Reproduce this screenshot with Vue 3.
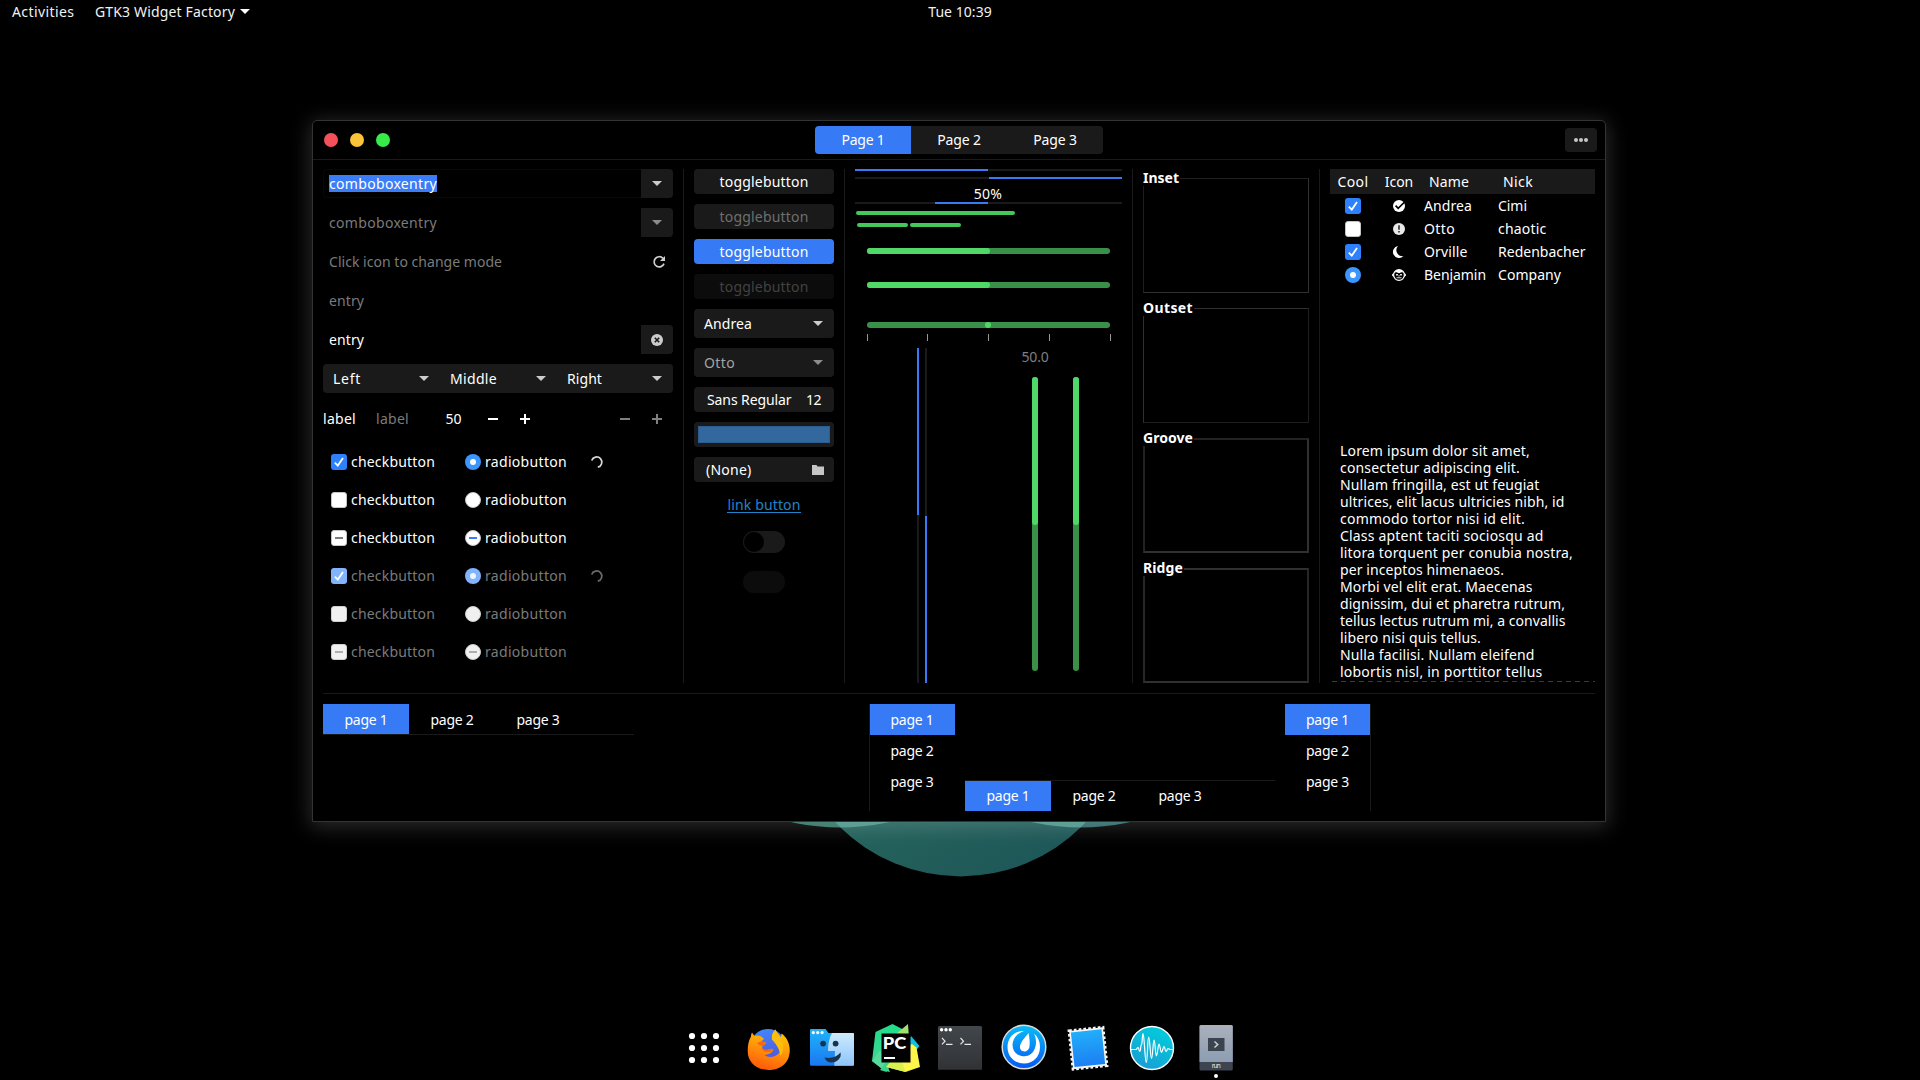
<script setup>
// Spreads a label over the given width by adjusting its letter spacing.
const vFit = {
  mounted(el, { value }) {
    const range = document.createRange()
    range.selectNodeContents(el)
    const natural = range.getBoundingClientRect().width
    const count = el.textContent.trim().length
    el.style.letterSpacing = `${((value - natural) / count).toFixed(3)}px`
  },
}

const checks = [
  { state: 'on', dim: false, spin: true },
  { state: 'off', dim: false },
  { state: 'mixed', dim: false },
  { state: 'on', dim: true, spin: true },
  { state: 'off', dim: true },
  { state: 'mixed', dim: true },
]
const linked = [
  { label: 'Left', w: 28, cls: 'first' },
  { label: 'Middle', w: 47, cls: '' },
  { label: 'Right', w: 35, cls: 'last' },
]
const frames = [
  { label: 'Inset', w: 36 },
  { label: 'Outset', w: 50 },
  { label: 'Groove', w: 50 },
  { label: 'Ridge', w: 40 },
]
const people = [
  { state: 'on', icon: 'ok', name: 'Andrea', nw: 48, nick: 'Cimi', kw: 29 },
  { state: 'off', icon: 'warn', name: 'Otto', nw: 31, nick: 'chaotic', kw: 48.5 },
  { state: 'on', icon: 'moon', name: 'Orville', nw: 43.5, nick: 'Redenbacher', kw: 87.5 },
  { state: 'radio', icon: 'monkey', name: 'Benjamin', nw: 62, nick: 'Company', kw: 63 },
]
const lorem = [
  ['Lorem ipsum dolor sit amet,', 190],
  ['consectetur adipiscing elit.', 180],
  ['Nullam fringilla, est ut feugiat', 199.5],
  ['ultrices, elit lacus ultricies nibh, id', 224.5],
  ['commodo tortor nisi id elit.', 185],
  ['Class aptent taciti sociosqu ad', 203.5],
  ['litora torquent per conubia nostra,', 233],
  ['per inceptos himenaeos.', 164],
  ['Morbi vel elit erat. Maecenas', 192.5],
  ['dignissim, dui et pharetra rutrum,', 225],
  ['tellus lectus rutrum mi, a convallis', 225.5],
  ['libero nisi quis tellus.', 141],
  ['Nulla facilisi. Nullam eleifend', 194.5],
  ['lobortis nisl, in porttitor tellus', 202.5],
  ['malesuada vitae.', 109],
]
const pages = ['page 1', 'page 2', 'page 3']
</script>

<template>
  <div class="desktop">
    <svg class="wallpaper" viewBox="0 0 400 70" width="400" height="70">
      <defs>
        <linearGradient id="wpMain" x1="0.2" y1="0" x2="0.8" y2="1">
          <stop offset="0.45" stop-color="#29695e" />
          <stop offset="1" stop-color="#1d5557" />
        </linearGradient>
        <clipPath id="wpClip"><circle cx="200.5" cy="-107.6" r="172" /></clipPath>
      </defs>
      <circle cx="80" cy="-214.5" r="230" fill="#337465" />
      <circle cx="321" cy="-214.5" r="230" fill="#2f696a" />
      <circle cx="200.5" cy="-107.6" r="172" fill="url(#wpMain)" />
      <g clip-path="url(#wpClip)" fill="#4c958a">
        <circle cx="80" cy="-214.5" r="230" />
        <circle cx="321" cy="-214.5" r="230" />
      </g>
    </svg>

    <header class="topbar">
      <div class="top-left">
        <span v-fit="62.5">Activities</span>
        <span v-fit="140" class="appname">GTK3 Widget Factory</span>
        <i class="arrow white"></i>
      </div>
      <span v-fit="63.5">Tue 10:39</span>
      <div class="top-right"></div>
    </header>

    <main class="window">
      <div class="titlebar">
        <div class="lights"><i class="red"></i><i class="yellow"></i><i class="green"></i></div>
        <div class="stack">
          <span class="active"><b v-fit="43">Page 1</b></span>
          <span><b v-fit="43.5">Page 2</b></span>
          <span><b v-fit="43.5">Page 3</b></span>
        </div>
        <div class="title-end">
          <button class="menu"><i></i><i></i><i></i></button>
        </div>
      </div>

      <div class="columns">
        <section class="col col1">
          <div class="entry outlined">
            <span v-fit="108" class="selected">comboboxentry</span>
            <span class="side"><i class="arrow"></i></span>
          </div>
          <div class="entry">
            <span v-fit="108" class="dim">comboboxentry</span>
            <span class="side"><i class="arrow faded"></i></span>
          </div>
          <div class="entry">
            <span v-fit="173" class="dim">Click icon to change mode</span>
            <svg class="refresh" width="14" height="14" viewBox="0 0 14 14">
              <path d="M11 3.4A5.100 5.100 0 1 0 12 8.600" fill="none" stroke="#cfcfcf" stroke-width="1.700" />
              <path d="M13 1V6H8Z" fill="#cfcfcf" />
            </svg>
          </div>
          <div class="entry"><span v-fit="35" class="dim">entry</span></div>
          <div class="entry">
            <span v-fit="35">entry</span>
            <span class="side">
              <svg width="12" height="12" viewBox="0 0 12 12">
                <circle cx="6" cy="6" r="6" fill="#cccccc" />
                <path d="M3.800 3.800l4.400 4.400M8.200 3.800L3.800 8.200" stroke="#1a1a1a" stroke-width="1.600" />
              </svg>
            </span>
          </div>
          <div class="linked">
            <div v-for="l in linked" :key="l.label" :class="['seg', l.cls]">
              <span v-fit="l.w">{{ l.label }}</span><i class="arrow"></i>
            </div>
          </div>
          <div class="spinrow">
            <span v-fit="33" class="lab">label</span>
            <span v-fit="33" class="lab2 dim">label</span>
            <span v-fit="16" class="num">50</span>
            <i class="minus m1"></i><i class="plus p1"></i>
            <i class="minus m2 off"></i><i class="plus p1 off"></i>
          </div>
          <div v-for="(c, i) in checks" :key="i" :class="['checkrow', { disabled: c.dim }]">
            <i :class="['check', c.state]">
              <svg v-if="c.state === 'on'" width="16" height="16" viewBox="0 0 16 16">
                <path d="M3.800 8.600L6.800 11.600L12 4" fill="none" stroke="#fff" stroke-width="1.800" />
              </svg>
            </i>
            <span v-fit="84" class="clabel">checkbutton</span>
            <i :class="['radio', c.state]"></i>
            <span v-fit="82" class="rlabel">radiobutton</span>
            <svg v-if="c.spin" class="spinner" width="14" height="14" viewBox="0 0 14 14">
              <path d="M1.700 5.500A5.200 5.200 0 1 1 7.800 12.200" fill="none" stroke="#d6d6d6" stroke-width="1.700" />
            </svg>
          </div>
        </section>
        <i class="vsep"></i>

        <section class="col col2">
          <div class="btn"><span v-fit="89">togglebutton</span></div>
          <div class="btn"><span v-fit="89" class="grey">togglebutton</span></div>
          <div class="btn blue"><span v-fit="89">togglebutton</span></div>
          <div class="btn ghost"><span v-fit="89">togglebutton</span></div>
          <div class="btn combo"><span v-fit="48">Andrea</span><i class="arrow"></i></div>
          <div class="btn combo"><span v-fit="31" class="soft">Otto</span><i class="arrow faded"></i></div>
          <div class="btn fontbtn"><span v-fit="84.5">Sans Regular</span><span v-fit="15">12</span></div>
          <div class="btn"><i class="swatch"></i></div>
          <div class="btn filebtn">
            <span v-fit="45.5">(None)</span>
            <svg width="12" height="10" viewBox="0 0 12 10"><path d="M0 0H4.500L5.500 1.500H12V10H0Z" fill="#c6c6c6" /></svg>
          </div>
          <div class="link"><span v-fit="73">link button</span></div>
          <div class="switch"><i></i></div>
          <div class="switch off"></div>
        </section>
        <i class="vsep"></i>

        <section class="col col3">
          <div class="prog"><i class="left"></i></div>
          <div class="prog second"><i class="right"></i></div>
          <div class="pct"><span v-fit="28.5">50%</span></div>
          <div class="prog"><i class="pulse"></i></div>
          <div class="level"><i></i></div>
          <div class="level two"><i></i><i></i></div>
          <div class="scale s1"><i></i></div>
          <div class="scale s2"><i></i></div>
          <div class="scale s3"><i class="dot"></i></div>
          <div class="ticks"><i v-for="n in 5" :key="n"></i></div>
          <div class="verticals">
            <div class="vprog"><i></i></div>
            <div class="vprog inv"><i></i></div>
            <div class="vscale-col">
              <span v-fit="27">50.0</span>
              <div class="vscale"><i></i></div>
            </div>
            <div class="vscale lone"><i></i></div>
          </div>
        </section>
        <i class="vsep"></i>

        <section class="col col4">
          <div v-for="f in frames" :key="f.label" :class="['frame', f.label.toLowerCase()]">
            <strong v-fit="f.w">{{ f.label }}</strong>
          </div>
        </section>
        <i class="vsep"></i>

        <section class="col col5">
          <div class="trow thead">
            <div class="c0"><span v-fit="31">Cool</span></div>
            <div class="c1"><span v-fit="28.5">Icon</span></div>
            <div class="c2"><span v-fit="40">Name</span></div>
            <div class="c3"><span v-fit="30">Nick</span></div>
          </div>
          <div v-for="p in people" :key="p.name" class="trow">
            <div class="c0">
              <i v-if="p.state === 'radio'" class="radio on"></i>
              <i v-else :class="['check', p.state]">
                <svg v-if="p.state === 'on'" width="16" height="16" viewBox="0 0 16 16">
                  <path d="M3.800 8.600L6.800 11.600L12 4" fill="none" stroke="#fff" stroke-width="1.800" />
                </svg>
              </i>
            </div>
            <div class="c1">
              <svg v-if="p.icon === 'ok'" width="14" height="14" viewBox="0 0 14 14">
                <circle cx="7" cy="7" r="6" fill="#fff" />
                <path d="M3.600 6.600L6.200 9.400L12.600 3" fill="none" stroke="#000" stroke-width="1.700" />
              </svg>
              <svg v-else-if="p.icon === 'warn'" width="14" height="14" viewBox="0 0 14 14">
                <circle cx="7" cy="7" r="6" fill="#e9e9e9" />
                <path d="M6.100 3.200H7.900V7.700H6.100ZM6.100 8.900H7.900V10.600H6.100Z" fill="#444" />
              </svg>
              <svg v-else-if="p.icon === 'moon'" width="14" height="14" viewBox="0 0 14 14">
                <path d="M6 .9A6.100 6.100 0 1 0 11.400 11.200A6.200 6.200 0 0 1 6 .9Z" fill="#fff" />
              </svg>
              <svg v-else width="14" height="14" viewBox="0 0 14 14">
                <circle cx="1.900" cy="7" r="1.400" fill="#000" stroke="#fff" />
                <circle cx="12.100" cy="7" r="1.400" fill="#000" stroke="#fff" />
                <circle cx="7" cy="7" r="5.400" fill="#000" stroke="#fff" stroke-width="1.200" />
                <path d="M2.200 4.600A5.400 5.400 0 0 1 11.800 4.600L9.500 4.200L7 5.200L4.500 4.200Z" fill="#fff" />
                <path d="M4 5.900H6V7.500H4ZM8 5.900H10V7.500H8ZM6.400 7.300H7.600V8.600H6.400ZM4.500 9.200H9.500V10.200H4.500Z" fill="#ddd" />
              </svg>
            </div>
            <div class="c2"><span v-fit="p.nw">{{ p.name }}</span></div>
            <div class="c3"><span v-fit="p.kw">{{ p.nick }}</span></div>
          </div>
          <div class="textview">
            <p v-for="l in lorem" :key="l[0]"><span v-fit="l[1]">{{ l[0] }}</span></p>
            <i class="overshoot"></i>
          </div>
        </section>
      </div>

      <i class="hsep"></i>

      <div class="books">
        <div class="book top">
          <span v-for="(p, i) in pages" :key="p" :class="{ active: i === 0 }"><b v-fit="43">{{ p }}</b></span>
        </div>
        <div class="book side-left">
          <span v-for="(p, i) in pages" :key="p" :class="{ active: i === 0 }"><b v-fit="43">{{ p }}</b></span>
        </div>
        <div class="book bottom">
          <span v-for="(p, i) in pages" :key="p" :class="{ active: i === 0 }"><b v-fit="43">{{ p }}</b></span>
        </div>
        <div class="book side-right">
          <span v-for="(p, i) in pages" :key="p" :class="{ active: i === 0 }"><b v-fit="43">{{ p }}</b></span>
        </div>
      </div>
    </main>

    <footer class="dock">
      <svg viewBox="0 0 48 48">
        <g fill="#fff">
          <template v-for="y in [12, 24, 36]" :key="y">
            <circle v-for="x in [12, 24, 36]" :key="x" :cx="x" :cy="y" r="3.100" />
          </template>
        </g>
      </svg>

      <svg viewBox="0 0 48 48">
        <defs>
          <linearGradient id="ffBody" x1="0.7" y1="0" x2="0.4" y2="1">
            <stop offset="0" stop-color="#ffcb00" /><stop offset="0.45" stop-color="#ff9a0a" /><stop offset="1" stop-color="#ff5a0a" />
          </linearGradient>
          <linearGradient id="ffGlobe" x1="0" y1="0" x2="0.3" y2="1">
            <stop offset="0" stop-color="#3f8cff" /><stop offset="1" stop-color="#5156d6" />
          </linearGradient>
        </defs>
        <g transform="translate(0 -0.6)">
          <circle cx="24" cy="23.500" r="18" fill="url(#ffGlobe)" />
          <path d="M7 13C7 11 7.500 10 8 9C9 10.500 9.500 11.500 10.500 12.500C13.500 11.500 16.500 12 18.500 14L20 15.500L18 17C18.500 18.500 20 18.800 22 19C22.500 20.500 20.500 21.500 18.500 22.500C17.500 24.500 19 26.500 22 26.500C25 26.500 27 24.500 29.500 26C28.500 29 25 31 20.500 31.500C24 34.800 32 34 35.500 29C36 25 31 19 28 16C27.500 11 29.500 8.500 31.500 6.200C32.300 9.500 34.500 10.500 36.500 13.500C37.500 13 37.300 11 37.600 10C41 12.500 45.800 18 45.800 27C45.500 41 35 46.500 24.500 46.500C12 46.500 3.700 38 3.700 28C3.700 22 4.500 17 7 13Z" fill="url(#ffBody)" />
          <path d="M28 16C27.500 11 29.500 8.500 31.500 6.200C32.500 10 36.500 12 38.500 18C40 23 39.500 28 36.500 33C37 27 31 19 28 16Z" fill="#ffbd0b" />
          <path d="M18.500 22.500C20.500 21.500 22.500 20.500 22 19C20 18.800 18.500 18.500 18 17C16 18.500 14.500 19 13 19C14 21 16 23 18.500 22.500ZM18 23.500C18 26 20 26.700 22 26.500C25 26.500 27 24.500 29.500 26C28 28 25 29 22 28.500C19 28 17 26 18 23.500Z" fill="#f56a10" />
        </g>
      </svg>

      <svg viewBox="0 0 48 48">
        <defs>
          <linearGradient id="fdL" x1="0" y1="0" x2="0" y2="1"><stop offset="0" stop-color="#1fb4fb" /><stop offset="1" stop-color="#1b78f0" /></linearGradient>
          <linearGradient id="fdR" x1="0" y1="0" x2="0" y2="1"><stop offset="0" stop-color="#cdeafd" /><stop offset="1" stop-color="#8ec5fb" /></linearGradient>
        </defs>
        <path d="M2 6Q2 5 3 5H17.500L20.500 9H45Q46 9 46 10V40.500Q46 41.700 44.800 41.700H3.200Q2 41.700 2 40.500Z" fill="url(#fdL)" />
        <path d="M24 9H45Q46 9 46 10V40.500Q46 41.700 44.800 41.700H26.300L27 27H20C20 21 21 14 24 9Z" fill="url(#fdR)" />
        <g fill="#fff"><circle cx="5.300" cy="8.600" r="1.600" /><circle cx="9.700" cy="8.600" r="1.600" /><circle cx="14.100" cy="8.600" r="1.600" /></g>
        <g fill="#16344b"><circle cx="15.100" cy="19.600" r="2.900" /><circle cx="27.600" cy="19.600" r="2.900" /><path d="M16.500 33.500C23 34.800 29 33 32.500 28.500C34 34 29 38.500 23.500 38.500C20 38.500 17.500 36.500 16.500 33.500Z" /></g>
      </svg>

      <svg viewBox="0 0 48 48">
        <defs>
          <linearGradient id="pcG" x1="0" y1="0" x2="0" y2="1"><stop offset="0" stop-color="#22dd8c" /><stop offset="1" stop-color="#3fd58e" /></linearGradient>
        </defs>
        <path d="M39 12L47.500 22L38 34L30 24Z" fill="#0fc0e4" />
        <path d="M3.500 8L20.500 0L36 8V12L16 44L12 46L0 37Z" fill="url(#pcG)" />
        <path d="M24 10L36 0L37 14L30 20Z" fill="#9fe070" />
        <path d="M8 26L0 37L12 46.500L18 48Z" fill="#57da9b" />
        <path d="M40 20L44.500 23.500L48 43L33.500 48L14.500 43L14 36Z" fill="#fcf54a" />
        <path d="M14 38L20 38L14.500 48L8 46Z" fill="#35d48d" />
        <path d="M14 43L18 38H30L33.500 48Z" fill="#d9ef4f" />
        <rect x="9.500" y="9.500" width="29" height="29" fill="#000" />
        <text x="10.800" y="25" font-family="Lato, sans-serif" font-weight="900" font-size="16" fill="#fff" textLength="23.500" lengthAdjust="spacingAndGlyphs">PC</text>
        <rect x="12" y="33" width="11" height="2" fill="#fff" />
      </svg>

      <svg viewBox="0 0 48 48">
        <defs><linearGradient id="tmG" x1="0" y1="0" x2="0" y2="1"><stop offset="0" stop-color="#42474c" /><stop offset="1" stop-color="#303236" /></linearGradient></defs>
        <rect x="2" y="2" width="44" height="44" rx="1.500" fill="url(#tmG)" />
        <rect x="2" y="45" width="44" height="1" fill="#232528" />
        <g fill="#fff"><circle cx="5.600" cy="5.700" r="1.700" /><circle cx="10" cy="5.700" r="1.700" /><circle cx="14.300" cy="5.700" r="1.700" /></g>
        <g fill="none" stroke="#e6e6e6" stroke-width="1.200"><path d="M6 14L9 17.200L6 20.300M10 20.300H16.500" /><path d="M24.500 14L27.500 17.200L24.500 20.300M28.500 20.300H35" /></g>
      </svg>

      <svg viewBox="0 0 48 48">
        <defs><linearGradient id="mmG" x1="0" y1="0" x2="0" y2="1"><stop offset="0" stop-color="#08bdf8" /><stop offset="1" stop-color="#0758f2" /></linearGradient></defs>
        <circle cx="24" cy="23" r="21.800" fill="url(#mmG)" stroke="#dcdcdc" stroke-width="1.500" />
        <path d="M24 7C13 6.500 7.500 15 7.500 23C7.500 33 15 39.500 24 39.500C33.500 39.500 40 32.500 40 23C40 17.500 38 13 34 9.500C36.500 15 36.500 20 35 24C33 29.500 29 32.500 23.500 32.200C17 31.800 12.500 27.500 12.500 20.500C13 14 17 9.500 24 7Z" fill="#fff" />
        <path d="M28.500 9C29.500 14 30 18 29.500 22.500C29 26 26.500 27.500 24.500 27.500C21 27.500 19.500 24.500 20 22C21 17.500 25 13.500 28.500 9Z" fill="#fff" />
      </svg>

      <svg viewBox="0 0 48 48">
        <defs><linearGradient id="stG" x1="0" y1="0" x2="0" y2="1"><stop offset="0" stop-color="#22aefa" /><stop offset="1" stop-color="#1c7ff3" /></linearGradient></defs>
        <g transform="rotate(-6 24 24)">
          <rect x="7" y="5" width="34" height="38.500" fill="#f4f4f4" />
          <rect x="7" y="5" width="34" height="38.500" fill="none" stroke="#f4f4f4" stroke-width="3" stroke-dasharray="2.700 2.100" />
          <rect x="8.600" y="6.800" width="30.800" height="34.800" fill="url(#stG)" />
        </g>
      </svg>

      <svg viewBox="0 0 48 48">
        <defs><linearGradient id="wvG" x1="0.300" y1="0.900" x2="0.800" y2="0"><stop offset="0" stop-color="#17a2d4" /><stop offset="1" stop-color="#00cfdc" /></linearGradient></defs>
        <circle cx="24" cy="24" r="21.500" fill="url(#wvG)" stroke="#fff" stroke-width="1.400" />
        <path d="M3 25.500H8C9 25.500 9 23.500 10 23.500S10.800 27.500 11.800 27.500S12.500 20.500 13.500 20.500S14 9.500 15.100 9.500S17 38.500 18.300 38.500S19.500 13 20.700 13S22.300 34.500 23.500 34.500S25 16 26.100 16S27.300 32 28.400 32S30 20 31 20S32.500 28.500 33.500 28.500S35 22.500 36 22.500S37 27.500 38 27.500S39 24.500 40 24.500S41 25.500 42 25.500H45" fill="none" stroke="#fff" stroke-width="1.200" />
      </svg>

      <svg viewBox="0 0 48 48">
        <defs><linearGradient id="rnG" x1="0" y1="0" x2="0" y2="1"><stop offset="0" stop-color="#abb0bc" /><stop offset="1" stop-color="#8c9db2" /></linearGradient></defs>
        <rect x="7.500" y="1" width="33.300" height="45.500" rx="1.500" fill="#3c4550" />
        <path d="M7.500 2.500Q7.500 1 9 1H39.300Q40.800 1 40.800 2.500V38H7.500Z" fill="url(#rnG)" />
        <rect x="16" y="14" width="16.500" height="13" fill="#3b444e" />
        <path d="M22.500 17.500L25.700 20.500L22.500 23.500" fill="none" stroke="#c7ccd2" stroke-width="1.600" />
        <text x="24.200" y="44.300" text-anchor="middle" font-family="Noto Sans, sans-serif" font-size="6.500" fill="#e8e8e8" textLength="9">run</text>
      </svg>
      <i class="running"></i>
    </footer>
  </div>
</template>

<style>
html,
body {
  margin: 0;
  background: #000;
}
</style>

<style scoped>
.desktop {
  position: relative;
  width: 1920px;
  height: 1080px;
  overflow: hidden;
  background: #000;
  color: #fff;
  font: 14px/17px 'Noto Sans', sans-serif;
  display: flex;
  flex-direction: column;
  align-items: center;
}
i { display: block; flex: none; font-style: normal; }
b { font-weight: 400; }
span, strong, b { white-space: nowrap; }
svg { display: block; flex: none; }
.wallpaper {
  position: absolute;
  left: 760px;
  top: 812px;
}
.topbar {
  width: 1896px;
  height: 24px;
  display: flex;
  align-items: center;
  color: #f2f2f2;
}
.topbar span { margin-bottom: 2px; }
.top-left, .top-right { flex: 1; display: flex; align-items: center; }
.appname { margin-left: 20.500px; }
.arrow {
  width: 0;
  height: 0;
  border: 5px solid transparent;
  border-top-color: #cccccc;
  border-bottom: 0;
}
.arrow.white { border-top-color: #fff; margin: 0 0 2px 5px; }
.arrow.faded { border-top-color: #8c8c8c; }

.window {
  position: relative;
  box-sizing: border-box;
  width: 1294px;
  height: 702px;
  margin: 96px 0 0 -2px;
  border: 1px solid #333;
  border-radius: 5px 5px 0 0;
  background: #000;
  box-shadow: 0 3px 20px 2px rgba(255, 255, 255, 0.17);
}
.titlebar {
  box-sizing: border-box;
  height: 39px;
  border-bottom: 1px solid #1a1a1a;
  display: flex;
  align-items: center;
  padding: 0 8px 0 11px;
}
.lights { display: flex; gap: 12px; width: 491px; }
.lights i { width: 14px; height: 14px; border-radius: 50%; }
.red { background: #f5515a; }
.yellow { background: #fcc438; }
.green { background: #37eb48; }
.stack { display: flex; border-radius: 4px; overflow: hidden; background: #1a1a1a; }
.stack span { width: 96px; height: 28px; display: flex; align-items: center; justify-content: center; }
.stack b { margin-bottom: 2px; }
.stack .active { background: #367af6; }
.title-end { flex: 1; display: flex; justify-content: flex-end; }
.menu {
  width: 32px;
  height: 24px;
  padding: 0;
  border: 0;
  border-radius: 4px;
  background: #1a1a1a;
  display: flex;
  align-items: center;
  justify-content: center;
  gap: 1px;
}
.menu i { width: 4px; height: 4px; border-radius: 50%; background: #c6c6c6; }

.columns { display: flex; gap: 10px; padding: 9px 10px 0; height: 514px; }
.col { display: flex; flex-direction: column; flex: none; }
.vsep { width: 1px; background: #1a1a1a; }
.hsep { height: 1px; background: #1a1a1a; margin: 10px 10px; }

.col1 { width: 350px; }
.entry {
  box-sizing: border-box;
  height: 29px;
  margin-bottom: 10px;
  padding-left: 6px;
  display: flex;
  align-items: center;
  justify-content: space-between;
}
.outlined { box-shadow: inset 0 0 0 1px #08080a; border-radius: 4px; }
.selected { background: #3a7df7; }
.dim { color: #7b7b7b; }
.side {
  width: 32px;
  height: 29px;
  background: #1a1a1a;
  border-radius: 0 4px 4px 0;
  display: flex;
  align-items: center;
  justify-content: center;
}
.refresh { margin-right: 7px; }
.linked { display: flex; background: #1a1a1a; border-radius: 4px; height: 29px; }
.seg { width: 117px; box-sizing: border-box; padding: 0 11px 0 10px; display: flex; align-items: center; justify-content: space-between; }
.seg.last { width: 116px; }
.spinrow { display: flex; align-items: center; height: 32px; margin: 10px 0 8px; }
.spinrow span { margin-bottom: 1px; }
.lab { width: 53px; }
.lab2 { width: 69.500px; }
.num { width: 42.500px; }
.minus, .plus { width: 10px; height: 10px; background: linear-gradient(#fff, #fff) 0 4px / 10px 2px no-repeat; }
.plus { background: linear-gradient(#fff, #fff) 0 4px / 10px 2px no-repeat, linear-gradient(#fff, #fff) 4px 0 / 2px 10px no-repeat; }
.p1 { margin-left: 22px; }
.m2 { margin-left: 90px; }
.off.minus, .off.plus { opacity: 0.5; }

.checkrow { display: flex; align-items: center; height: 38px; padding-left: 8px; }
.checkrow span { margin-bottom: 2px; }
.check, .radio {
  box-sizing: border-box;
  width: 16px;
  height: 16px;
  border-radius: 3px;
  background: #fff;
  border: 1px solid #c4c4c4;
  display: flex;
  align-items: center;
  justify-content: center;
}
.radio { border-radius: 50%; }
.check.on { background: #2f80fd; border: 0; }
.radio.on { background: #3b97fd; border: 0; }
.radio.on::after { content: ''; width: 6px; height: 6px; border-radius: 50%; background: #fff; }
.mixed::after { content: ''; width: 8px; height: 2px; background: #7d7d7d; }
.radio.mixed::after { background: #3a7df7; }
.clabel { width: 113px; margin-left: 4px; }
.rlabel { width: 105px; margin-left: 4px; }
.checkrow .radio { margin-left: 1px; }
.disabled { color: #7b7b7b; }
.disabled .check, .disabled .radio { background: #f0f0f0; border-color: #cfcfcf; }
.disabled .check.on, .disabled .radio.on { background: #82b4fd; }
.disabled .radio.on::after { background: #edf4fe; }
.disabled .mixed::after { background: #adadad; }
.disabled .spinner { opacity: 0.5; }

.col2 { width: 140px; gap: 10px; }
.btn {
  box-sizing: border-box;
  height: 25px;
  border-radius: 4px;
  background: #1a1a1a;
  display: flex;
  align-items: center;
  justify-content: center;
  flex: none;
}
.grey { color: #6f6f6f; }
.soft { color: #a3a3a3; }
.blue { background: #367af6; }
.ghost { background: #0c0c0c; color: #424242; }
.combo { height: 29px; justify-content: space-between; padding: 0 11px 0 10px; }
.fontbtn { justify-content: space-between; padding: 0 13px; }
.filebtn { justify-content: space-between; padding: 0 10px 0 12px; }
.swatch { box-sizing: border-box; width: 132px; height: 17px; background: #33689f; border: 1px solid #2d5d90; }
.link { height: 25px; display: flex; justify-content: center; align-items: center; color: #2084cb; margin-bottom: 4px; }
.link span { border-bottom: 1px solid #2084cb; line-height: 17px; height: 16px; }
.switch { box-sizing: border-box; width: 42px; height: 22px; border-radius: 11px; background: #1a1a1a; align-self: center; padding: 1px; margin-bottom: 8px; flex: none; }
.switch i { width: 20px; height: 20px; border-radius: 50%; background: #000; }
.switch.off { background: #0c0c0c; }

.col3 { width: 267px; }
.prog { height: 2px; background: #1a1a1a; flex: none; }
.prog.second { margin-top: 6px; }
.prog i { height: 2px; background: #367af6; width: 133px; }
.prog .right { margin-left: 134px; }
.prog .pulse { width: 53px; margin-left: 80px; }
.pct { height: 23px; display: flex; justify-content: center; align-items: flex-end; }
.pct span { line-height: 17px; margin-right: 1px; }
.level { display: flex; height: 4px; margin: 7px 0 0 1px; }
.level i { width: 159px; border-radius: 2px; background: #43c859; }
.level.two { margin: 8px 0 0 2px; gap: 2px; }
.level.two i { width: 51px; }
.scale { height: 6px; width: 243px; margin-left: 12px; border-radius: 3px; background: #399048; flex: none; }
.scale i { height: 6px; width: 123px; border-radius: 3px; background: #50d866; }
.s1 { margin-top: 21px; }
.s2 { margin-top: 28px; }
.s3 { margin-top: 34px; }
.scale .dot { width: 6px; margin-left: 118px; }
.ticks { display: flex; gap: 60px; margin: 6px 0 7px 12px; flex: none; }
.ticks i { width: 1px; height: 7px; background: #999; }
.ticks i:first-child { margin-right: -1px; }
.verticals { display: flex; flex: 1; padding-left: 62px; }
.vprog { width: 2px; background: #1a1a1a; }
.vprog i { height: 167px; background: #367af6; }
.vprog.inv { margin-left: 6px; }
.vprog.inv i { margin-top: 168px; }
.vscale-col { width: 40px; margin-left: 88px; display: flex; flex-direction: column; align-items: center; color: #7f7f7f; }
.vscale-col span { line-height: 17px; margin-bottom: 12px; }
.vscale { width: 6px; height: 294px; border-radius: 3px; background: #399048; }
.vscale i { width: 6px; height: 148px; border-radius: 3px; background: #50d866; }
.vscale.lone { margin: 29px 0 0 18px; }

.col4 { width: 166px; gap: 15px; padding-top: 9px; height: 505px; }
.frame { box-sizing: border-box; height: 115px; border: 1px solid #1f1f1f; flex: none; }
.frame strong { display: inline-block; background: #000; height: 17px; line-height: 17px; margin: -10px 0 0 -1px; padding-right: 1px; vertical-align: top; font-weight: 700; }
.inset { border-color: #1f1f1f #303030 #303030 #1f1f1f; }
.outset { border-color: #303030 #1f1f1f #1f1f1f #303030; }
.groove { border: 2px solid #2a2a2a; border-color: #222 #303030 #303030 #222; }
.ridge { border: 2px solid #303030; border-color: #303030 #262626 #303030 #262626; }
.groove strong, .ridge strong { margin: -11px 0 0 -2px; }

.col5 { width: 265px; }
.trow { display: flex; align-items: center; height: 23px; flex: none; }
.thead { height: 25px; background: #1a1a1a; }
.c0 { width: 46px; display: flex; justify-content: center; }
.c1 { width: 46px; display: flex; justify-content: center; }
.c2 { width: 72px; padding-left: 2px; }
.c3 { padding-left: 2px; }
.thead .c2, .thead .c3 { padding-left: 7px; }
.thead .c2 { width: 67px; }
.textview { position: relative; height: 241px; overflow: hidden; margin-top: 156px; }
.textview p { margin: 0 0 0 10px; height: 17px; line-height: 17px; }
.overshoot {
  position: absolute;
  left: 2px;
  right: 0;
  bottom: 1px;
  height: 1px;
  background: repeating-linear-gradient(90deg, #3a3a3a 0 5px, #000 5px 9px);
}

.books { display: flex; height: 107px; padding: 0 10px; }
.book { display: flex; box-sizing: border-box; }
.book span { display: flex; align-items: center; justify-content: center; width: 86px; height: 30px; flex: none; }
.book .active { background: #367af6; }
.top { width: 311px; height: 31px; border-bottom: 1px solid #1a1a1a; }
.side-left { flex-direction: column; width: 86px; margin-left: 235px; border-left: 1px solid #1a1a1a; }
.side-left span, .side-right span { width: 85px; height: 31px; }
.side-left b { margin-right: 1px; }
.bottom { width: 310px; height: 31px; margin: 76px 0 0 10px; border-top: 1px solid #1a1a1a; }
.bottom b { margin-bottom: 2px; }
.side-right { flex-direction: column; width: 86px; margin-left: 10px; border-right: 1px solid #1a1a1a; }

.dock { display: flex; gap: 16px; position: relative; margin-top: 202px; }
.dock svg { width: 48px; height: 48px; }
.running { position: absolute; right: 22px; bottom: -6px; width: 4px; height: 4px; border-radius: 50%; background: #fff; }
</style>
